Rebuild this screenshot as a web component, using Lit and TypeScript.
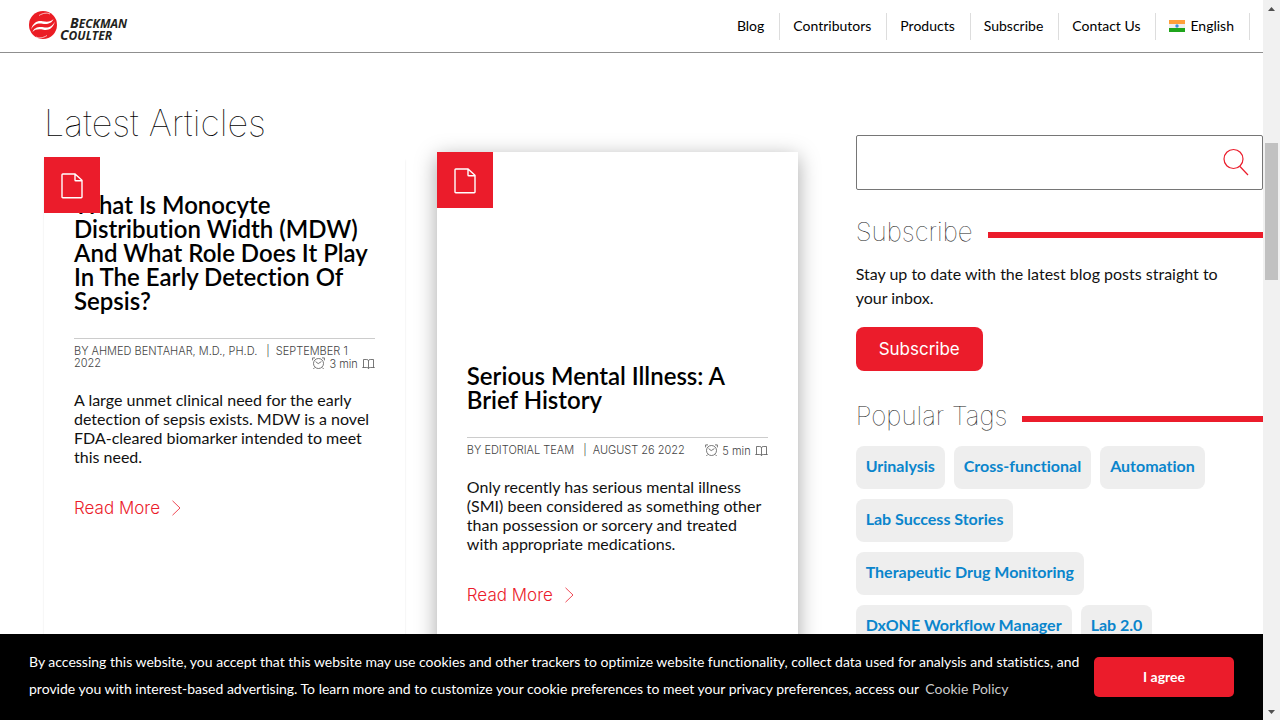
import { LitElement, html, svg, css } from "lit";
import { customElement, property } from "lit/decorators.js";

interface Article {
  title: string;
  author: string;
  date: string;
  minutes: number;
  excerpt: string;
  raised?: boolean;
}

const ARTICLES: Article[] = [
  {
    title: "What Is Monocyte Distribution Width (MDW) And What Role Does It Play In The Early Detection Of Sepsis?",
    author: "BY AHMED BENTAHAR, M.D., PH.D.",
    date: "SEPTEMBER 1 2022",
    minutes: 3,
    excerpt:
      "A large unmet clinical need for the early detection of sepsis exists. MDW is a novel FDA-cleared biomarker intended to meet this need.",
  },
  {
    title: "Serious Mental Illness: A Brief History",
    author: "BY EDITORIAL TEAM",
    date: "AUGUST 26 2022",
    minutes: 5,
    excerpt:
      "Only recently has serious mental illness (SMI) been considered as something other than possession or sorcery and treated with appropriate medications.",
    raised: true,
  },
];

const NAV = ["Blog", "Contributors", "Products", "Subscribe", "Contact Us"];

const TAGS = [
  "Urinalysis",
  "Cross-functional",
  "Automation",
  "Lab Success Stories",
  "Therapeutic Drug Monitoring",
  "DxONE Workflow Manager",
  "Lab 2.0",
];

const clock = svg`<g fill="none" stroke="#555" stroke-width=".8">
  <circle cx="6.5" cy="6.5" r="5"/><path d="M3.6 4.6 6.2 6.6 9.4 4.6M.6 3.4V.9H3M10 .9h2.4v2.5M2.6 10.6 1.4 12M10.4 10.6l1.2 1.4"/></g>`;
const book = svg`<path fill="none" stroke="#555" stroke-width=".8" d="M6.5 9.500V1.800Q6.2.5 4.800.5H1.500v8M6.500 1.800Q6.800.5 8.200.5h3.300v8M.3 8.500h4.400q1.500 0 1.800 1 .3-1 1.800-1h4.400"/>`;

@customElement("article-card")
export class ArticleCard extends LitElement {
  @property({ attribute: false }) article!: Article;

  static styles = css`
    :host {
      display: block;
      min-width: 0;
    }
    .card {
      position: relative;
      box-sizing: border-box;
      height: 100%;
      padding: 36px 30px 80px;
      background: #fff;
      box-shadow: 0 3px 2px rgba(0, 0, 0, 0.1);
    }
    .raised {
      margin-top: -5px;
      padding-top: 212px;
      box-shadow: 0 5px 20px rgba(0, 0, 0, 0.35);
    }
    .badge {
      position: absolute;
      top: 0;
      left: 0;
      box-sizing: border-box;
      display: grid;
      place-items: center;
      width: 56px;
      height: 56px;
      padding-top: 2px;
      background: #eb1c2b;
    }
    .title {
      margin: 0 0 25px;
      font: 600 24px/24px Lato, sans-serif;
      font-variant-ligatures: none;
      color: #000;
    }
    .meta {
      margin: 0 0 20px;
      padding-top: 6px;
      border-top: 1px solid #ccc;
      font: 300 11px/12px Inter, sans-serif;
      color: #444;
    }
    .meta::after {
      content: "";
      display: block;
      clear: both;
    }
    .author {
      margin-right: 9px;
    }
    .date {
      margin-left: 3px;
    }
    .time {
      float: right;
      display: flex;
      align-items: center;
      gap: 4px;
    }
    .excerpt {
      margin: 0 0 32px;
      font: 400 16px/19px Lato, sans-serif;
      font-variant-ligatures: none;
      color: #111;
    }
    .more {
      display: inline-flex;
      align-items: center;
      gap: 12px;
      font: 300 17px/20px Inter, sans-serif;
      color: #eb1c2b;
      text-decoration: none;
    }
  `;

  render() {
    const a = this.article;
    return html`<article class="card ${a.raised ? "raised" : ""}">
      <h2 class="title">${a.title}</h2>
      <div class="meta">
        <span class="author">${a.author}</span>|
        <span class="date">${a.date}</span>
        <span class="time"
          ><svg width="13" height="13" viewBox="0 0 13 13">${clock}</svg>
          ${a.minutes} min
          <svg width="13" height="10" viewBox="0 0 13 10">${book}</svg></span
        >
      </div>
      <p class="excerpt">${a.excerpt}</p>
      <a class="more" href="#">
        Read More
        <svg width="9" height="16" viewBox="0 0 9 16"><path d="M.5.8 8 8 .5 15.2" fill="none" stroke="#eb1c2b" stroke-width=".8" /></svg>
      </a>
      <span class="badge">
        <svg width="22" height="26" viewBox="0 0 22 26">
          <path d="M1.8 1H14l7 6.300v16.700a.8.8 0 0 1-.8.8H1.800a.8.8 0 0 1-.8-.8V1.800A.8.8 0 0 1 1.800 1ZM14 1v6a.8.8 0 0 0 .8.800H21" fill="none" stroke="#fff" stroke-width="1.400" />
        </svg>
      </span>
    </article>`;
  }
}

@customElement("app-root")
export class AppRoot extends LitElement {
  static styles = css`
    :host {
      display: grid;
      grid-template-columns: minmax(0, 1fr) 17px;
      height: 100vh;
      overflow: hidden;
      background: #fff;
      font-family: Lato, sans-serif;
      font-variant-ligatures: none;
      color: #111;
    }
    .page {
      display: grid;
      grid-template-rows: auto minmax(0, 1fr) auto;
      min-height: 0;
    }
    .top {
      display: flex;
      align-items: center;
      justify-content: space-between;
      padding: 11px 13px 11px 29px;
      border-bottom: 1px solid #8f8f8f;
    }
    .logo {
      display: flex;
      align-items: flex-start;
      gap: 3px;
      color: #231f20;
      text-decoration: none;
    }
    .words {
      display: grid;
      padding-top: 6px;
      font: italic 700 12px/11px "Open Sans", sans-serif;
    }
    .words .cap {
      font-size: 14px;
    }
    .indent {
      padding-left: 10px;
    }
    .nav {
      display: flex;
    }
    .nav-item {
      display: flex;
      align-items: center;
      gap: 5px;
      height: 27px;
      padding: 0 15px 0 13px;
      border-right: 1px solid #ddd;
      font-size: 14px;
      line-height: 18px;
      color: #000;
      text-decoration: none;
    }
    .main {
      display: grid;
      grid-template-columns: minmax(0, 37fr) minmax(0, 20fr);
      gap: 58px;
      padding-left: 44px;
      overflow: hidden;
    }
    .latest {
      display: grid;
      grid-template-rows: auto 1fr;
      padding-top: 48px;
      min-height: 600px;
    }
    .headline {
      margin: 0 0 12px;
      font: 100 36px/44px Inter, sans-serif;
      color: #000;
    }
    .cards {
      display: grid;
      grid-template-columns: repeat(2, minmax(0, 1fr));
      gap: 32px;
    }
    .side {
      padding-top: 82px;
    }
    .search {
      position: relative;
      display: block;
    }
    .field {
      display: block;
      box-sizing: border-box;
      width: 100%;
      height: 55px;
      padding: 0 56px 0 16px;
      border: 1px solid #767676;
      border-radius: 2px;
      font: 16px/20px Lato, sans-serif;
    }
    .go {
      position: absolute;
      top: 13px;
      right: 13px;
      width: 28px;
      height: 28px;
      padding: 0;
      border: 0;
      background: none;
    }
    .section {
      display: flex;
      align-items: center;
      gap: 15px;
      margin: 0;
      font: 100 26px/30px Inter, sans-serif;
      color: #222;
    }
    .section::after {
      content: "";
      flex: 1;
      height: 6px;
      margin-top: 5px;
      background: #eb1c2b;
    }
    .join {
      padding: 27px 0 30px;
    }
    .blurb {
      margin: 15px 40px 17px 0;
      font-size: 16px;
      line-height: 24px;
    }
    .subscribe {
      height: 44px;
      padding: 0 23px;
      border: 0;
      border-radius: 8px;
      background: #eb1c2b;
      color: #fff;
      font: 400 17px/20px Inter, sans-serif;
    }
    .tags {
      display: flex;
      flex-wrap: wrap;
      gap: 10px 9px;
      margin: 15px 40px 0 0;
    }
    .tag {
      padding: 10px 10px 13px;
      border-radius: 8px;
      background: #eee;
      color: #0a85cc;
      font-size: 16px;
      font-weight: 700;
      line-height: 20px;
      text-decoration: none;
    }
    .cookies {
      display: flex;
      align-items: center;
      gap: 8px;
      padding: 14px 29px 15px;
      background: #000;
      color: #fff;
    }
    .notice {
      flex: 1;
      margin: 0;
      padding-bottom: 3px;
      font-size: 14px;
      font-weight: 400;
      line-height: 27px;
    }
    .policy {
      margin-left: 3px;
      color: #ccc;
      text-decoration: none;
    }
    .agree {
      width: 140px;
      height: 40px;
      border: 0;
      border-radius: 5px;
      background: #eb1c2b;
      color: #fff;
      font: 700 14px/18px Lato, sans-serif;
    }
    .bar {
      display: grid;
      grid-template-rows: 17px 126px 137px 1fr 17px;
      justify-items: center;
      align-items: center;
      background: #f1f1f1;
    }
    .thumb {
      grid-row: 3;
      width: 13px;
      height: 100%;
      background: #c1c1c1;
    }
    .down {
      grid-row: 5;
    }
  `;

  render() {
    const swoosh = svg`<path d="M2 18.500C4 11.500 8.500 9.300 13.500 10.200c5 .9 8.500.5 11-2.200-1.500 4.500-6.500 5.500-11 4.700C8.500 11.800 5 13.200 2 18.500Z" fill="#fff" />`;
    return html`
      <div class="page">
        <header class="top">
          <a class="logo" href="#" aria-label="Beckman Coulter">
            <svg width="28" height="28" viewBox="0 0 28 28">
              <circle cx="14" cy="14" r="14" fill="#eb1c24" />
              ${swoosh}
              <g transform="rotate(180 14 14.500)">${swoosh}</g>
              <path d="M10 4.500C14 2 18 1.500 21 3M18 24.500c-4 2.500-8 3-11 1.500" fill="none" stroke="#fff" stroke-width=".7" />
            </svg>
            <span class="words">
              <span class="indent"><span class="cap">B</span>ECKMAN</span>
              <span><span class="cap">C</span>OULTER</span>
            </span>
          </a>
          <nav class="nav">
            ${NAV.map((n) => html`<a class="nav-item" href="#">${n}</a>`)}
            <a class="nav-item" href="#">
              <svg width="16" height="12" viewBox="0 0 16 12">
                <rect width="16" height="4" fill="#ff9f3a" />
                <rect y="4" width="16" height="4" fill="#eee" />
                <rect y="8" width="16" height="4" fill="#1fa51c" />
                <circle cx="8" cy="6" r="1.700" fill="#3a8fe0" />
              </svg>
              English
            </a>
          </nav>
        </header>
        <main class="main">
          <section class="latest">
            <h1 class="headline">Latest Articles</h1>
            <div class="cards">
              ${ARTICLES.map((a) => html`<article-card .article=${a}></article-card>`)}
            </div>
          </section>
          <aside class="side">
            <form class="search" role="search">
              <input class="field" type="search" aria-label="Search" />
              <button class="go" type="button" aria-label="Search">
                <svg width="28" height="28" viewBox="0 0 28 28" fill="none" stroke="#eb1c2b" stroke-width="1.200">
                  <circle cx="11.500" cy="11" r="9.500" /><path d="m18 18.500 8 8.500" />
                </svg>
              </button>
            </form>
            <section class="join">
              <h2 class="section">Subscribe</h2>
              <p class="blurb">Stay up to date with the latest blog posts straight to your inbox.</p>
              <button class="subscribe" type="button">Subscribe</button>
            </section>
            <section>
              <h2 class="section">Popular Tags</h2>
              <div class="tags">${TAGS.map((t) => html`<a class="tag" href="#">${t}</a>`)}</div>
            </section>
          </aside>
        </main>
        <footer class="cookies">
          <p class="notice">
            By accessing this website, you accept that this website may use cookies and other trackers to optimize
            website functionality, collect data used for analysis and statistics, and provide you with interest-based
            advertising. To learn more and to customize your cookie preferences to meet your privacy preferences,
            access our <a class="policy" href="#">Cookie Policy</a>
          </p>
          <button class="agree" type="button">I agree</button>
        </footer>
      </div>
      <div class="bar" aria-hidden="true">
        <svg width="7" height="4" viewBox="0 0 7 4"><path d="M0 4 3.500 0 7 4Z" fill="#505050" /></svg>
        <span class="thumb"></span>
        <svg class="down" width="7" height="4" viewBox="0 0 7 4"><path d="M0 0 3.500 4 7 0Z" fill="#505050" /></svg>
      </div>
    `;
  }
}
